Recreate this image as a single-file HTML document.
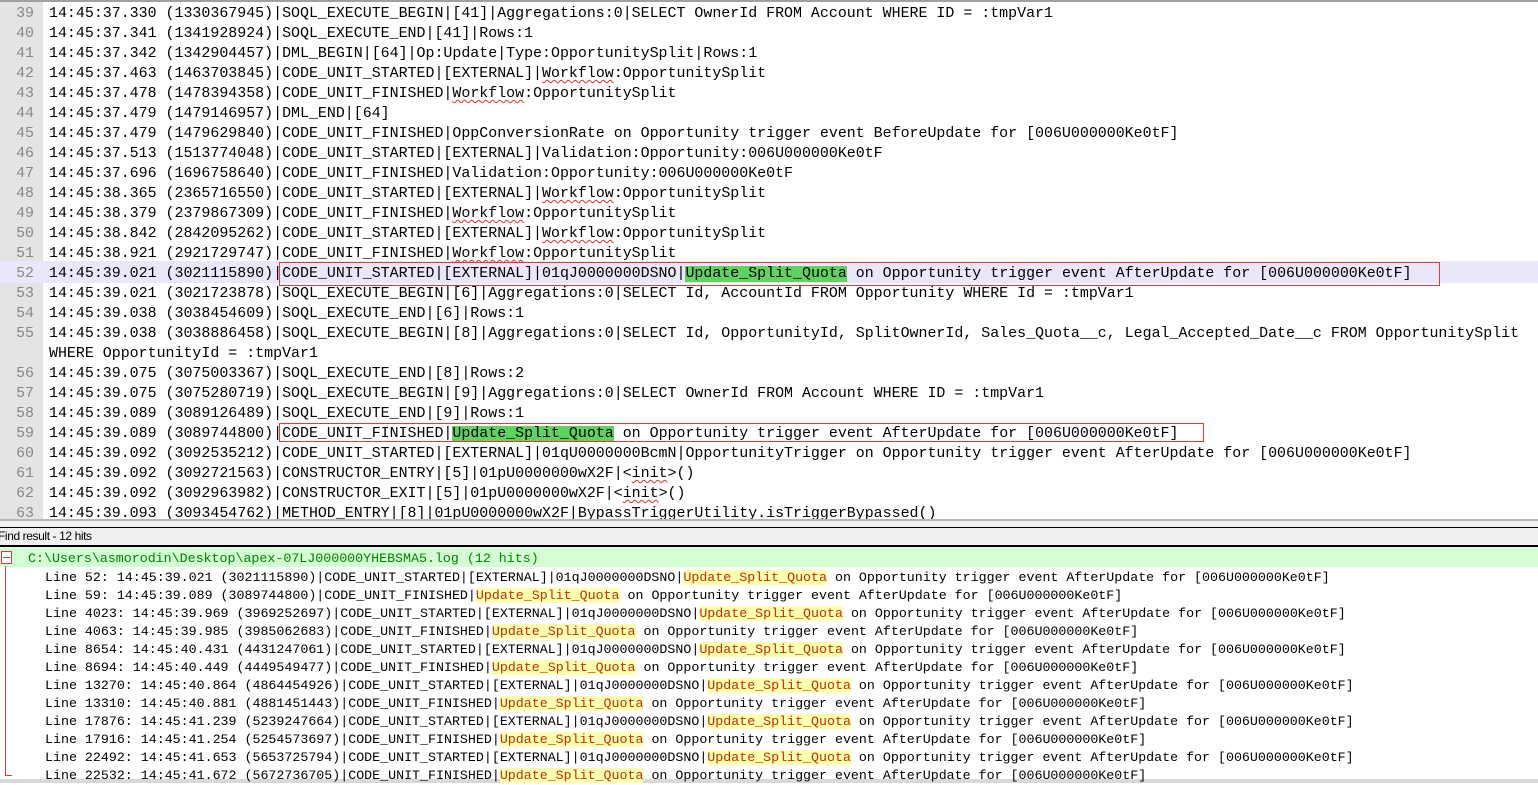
<!DOCTYPE html>
<html><head><meta charset="utf-8"><style>
*{margin:0;padding:0;box-sizing:border-box}
body{width:1538px;height:783px;overflow:hidden;background:#fff;position:relative;font-family:"Liberation Mono",monospace}
.ed{position:absolute;left:0;top:0;width:1538px;height:521px;background:#fff;border-top:2px solid #a0a0a0}
.gut{position:absolute;left:0;top:0;width:43px;height:521px;background:#e4e4e4}
.r{position:absolute;left:0;height:20px;line-height:20px;font-size:14.95px;color:#000;white-space:pre}
.n{position:absolute;left:0;width:34px;text-align:right;color:#888;font-size:14.95px}
.t{position:absolute;left:49px}
.sq{text-decoration:underline wavy #e03030;text-decoration-thickness:1px;text-underline-offset:2px}
.g{background:#5fd35f}
.box{position:absolute;border:1px solid #e03a3a}
.res .r{font-size:13.3px;height:18px;line-height:18px}
.y{background:#ffffb0;color:#c03000}
</style></head><body>
<div class="ed"><div class="gut"></div></div>
<div style="position:absolute;left:0;top:261px;width:1538px;height:22px;background:#e8e8fa"></div>
<div id="lines"></div>
<div class="box" style="left:279px;top:262px;width:1161px;height:24px"></div>
<div class="box" style="left:279px;top:423px;width:925px;height:19px"></div>

<div style="position:absolute;left:0;top:519px;width:1538px;height:2px;background:#b8b8b8"></div>
<div style="position:absolute;left:0;top:521px;width:1538px;height:28px;background:#f0f0f0"></div>
<div style="position:absolute;left:0;top:527px;width:1538px;height:1px;background:#000"></div>
<div style="position:absolute;left:0;top:545px;width:1538px;height:2px;background:#000"></div>
<div style="position:absolute;left:-2px;top:528px;height:17px;line-height:17px;font-family:'Liberation Sans',sans-serif;font-size:12px;letter-spacing:-0.4px;color:#000">Find result - 12 hits</div>
<div style="position:absolute;left:0;top:548px;width:1538px;height:19px;background:#d4ffd4"></div>
<div style="position:absolute;left:5px;top:566px;width:1px;height:210px;background:#d04040"></div>
<div style="position:absolute;left:5px;top:775px;width:7px;height:1px;background:#d04040"></div>
<div style="position:absolute;left:1px;top:551px;width:11px;height:13px;border:1px solid #d04040;background:#fff"></div>
<div style="position:absolute;left:3px;top:557px;width:7px;height:1px;background:#d04040"></div>
<div style="position:absolute;left:0;top:779px;width:1538px;height:4px;background:#d8d8d8"></div>
<div class="res" id="res"></div>
<script>
var W='<span class="sq">Workflow</span>';
var L=[
[39,"14:45:37.330 (1330367945)|SOQL_EXECUTE_BEGIN|[41]|Aggregations:0|SELECT OwnerId FROM Account WHERE ID = :tmpVar1"],
[40,"14:45:37.341 (1341928924)|SOQL_EXECUTE_END|[41]|Rows:1"],
[41,"14:45:37.342 (1342904457)|DML_BEGIN|[64]|Op:Update|Type:OpportunitySplit|Rows:1"],
[42,"14:45:37.463 (1463703845)|CODE_UNIT_STARTED|[EXTERNAL]|"+W+":OpportunitySplit"],
[43,"14:45:37.478 (1478394358)|CODE_UNIT_FINISHED|"+W+":OpportunitySplit"],
[44,"14:45:37.479 (1479146957)|DML_END|[64]"],
[45,"14:45:37.479 (1479629840)|CODE_UNIT_FINISHED|OppConversionRate on Opportunity trigger event BeforeUpdate for [006U000000Ke0tF]"],
[46,"14:45:37.513 (1513774048)|CODE_UNIT_STARTED|[EXTERNAL]|Validation:Opportunity:006U000000Ke0tF"],
[47,"14:45:37.696 (1696758640)|CODE_UNIT_FINISHED|Validation:Opportunity:006U000000Ke0tF"],
[48,"14:45:38.365 (2365716550)|CODE_UNIT_STARTED|[EXTERNAL]|"+W+":OpportunitySplit"],
[49,"14:45:38.379 (2379867309)|CODE_UNIT_FINISHED|"+W+":OpportunitySplit"],
[50,"14:45:38.842 (2842095262)|CODE_UNIT_STARTED|[EXTERNAL]|"+W+":OpportunitySplit"],
[51,"14:45:38.921 (2921729747)|CODE_UNIT_FINISHED|"+W+":OpportunitySplit"],
[52,"14:45:39.021 (3021115890)|CODE_UNIT_STARTED|[EXTERNAL]|01qJ0000000DSNO|<span class=\"g\">Update_Split_Quota</span> on Opportunity trigger event AfterUpdate for [006U000000Ke0tF]"],
[53,"14:45:39.021 (3021723878)|SOQL_EXECUTE_BEGIN|[6]|Aggregations:0|SELECT Id, AccountId FROM Opportunity WHERE Id = :tmpVar1"],
[54,"14:45:39.038 (3038454609)|SOQL_EXECUTE_END|[6]|Rows:1"],
[55,"14:45:39.038 (3038886458)|SOQL_EXECUTE_BEGIN|[8]|Aggregations:0|SELECT Id, OpportunityId, SplitOwnerId, Sales_Quota__c, Legal_Accepted_Date__c FROM OpportunitySplit"],
["","WHERE OpportunityId = :tmpVar1"],
[56,"14:45:39.075 (3075003367)|SOQL_EXECUTE_END|[8]|Rows:2"],
[57,"14:45:39.075 (3075280719)|SOQL_EXECUTE_BEGIN|[9]|Aggregations:0|SELECT OwnerId FROM Account WHERE ID = :tmpVar1"],
[58,"14:45:39.089 (3089126489)|SOQL_EXECUTE_END|[9]|Rows:1"],
[59,"14:45:39.089 (3089744800)|CODE_UNIT_FINISHED|<span class=\"g\">Update_Split_Quota</span> on Opportunity trigger event AfterUpdate for [006U000000Ke0tF]"],
[60,"14:45:39.092 (3092535212)|CODE_UNIT_STARTED|[EXTERNAL]|01qU0000000BcmN|OpportunityTrigger on Opportunity trigger event AfterUpdate for [006U000000Ke0tF]"],
[61,"14:45:39.092 (3092721563)|CONSTRUCTOR_ENTRY|[5]|01pU0000000wX2F|&lt;<span class=\"sq\">init</span>&gt;()"],
[62,"14:45:39.092 (3092963982)|CONSTRUCTOR_EXIT|[5]|01pU0000000wX2F|&lt;<span class=\"sq\">init</span>&gt;()"],
[63,"14:45:39.093 (3093454762)|METHOD_ENTRY|[8]|01pU0000000wX2F|BypassTriggerUtility.isTriggerBypassed()"]];
var h='';
L.forEach(function(l,i){h+='<div class="r" style="top:'+(4+20*i)+'px"><span class="n">'+l[0]+'</span><span class="t">'+l[1]+'</span></div>';});
document.getElementById('lines').innerHTML=h;
var Y='<span class="y">Update_Split_Quota</span>';
var S=function(n,t,c){return "Line "+n+": "+t+" ("+c+")|CODE_UNIT_STARTED|[EXTERNAL]|01qJ0000000DSNO|"+Y+" on Opportunity trigger event AfterUpdate for [006U000000Ke0tF]";};
var F=function(n,t,c){return "Line "+n+": "+t+" ("+c+")|CODE_UNIT_FINISHED|"+Y+" on Opportunity trigger event AfterUpdate for [006U000000Ke0tF]";};
var R=[S(52,"14:45:39.021","3021115890"),F(59,"14:45:39.089","3089744800"),S(4023,"14:45:39.969","3969252697"),F(4063,"14:45:39.985","3985062683"),
S(8654,"14:45:40.431","4431247061"),F(8694,"14:45:40.449","4449549477"),S(13270,"14:45:40.864","4864454926"),F(13310,"14:45:40.881","4881451443"),
S(17876,"14:45:41.239","5239247664"),F(17916,"14:45:41.254","5254573697"),S(22492,"14:45:41.653","5653725794"),F(22532,"14:45:41.672","5672736705")];
h='<div class="r" style="top:550px;left:28px;color:#008000">C:\\Users\\asmorodin\\Desktop\\apex-07LJ000000YHEBSMA5.log (12 hits)</div>';
R.forEach(function(t,i){h+='<div class="r" style="top:'+(569+18*i)+'px;left:45px">'+t+'</div>';});
document.getElementById('res').innerHTML=h;
</script>
</body></html>
